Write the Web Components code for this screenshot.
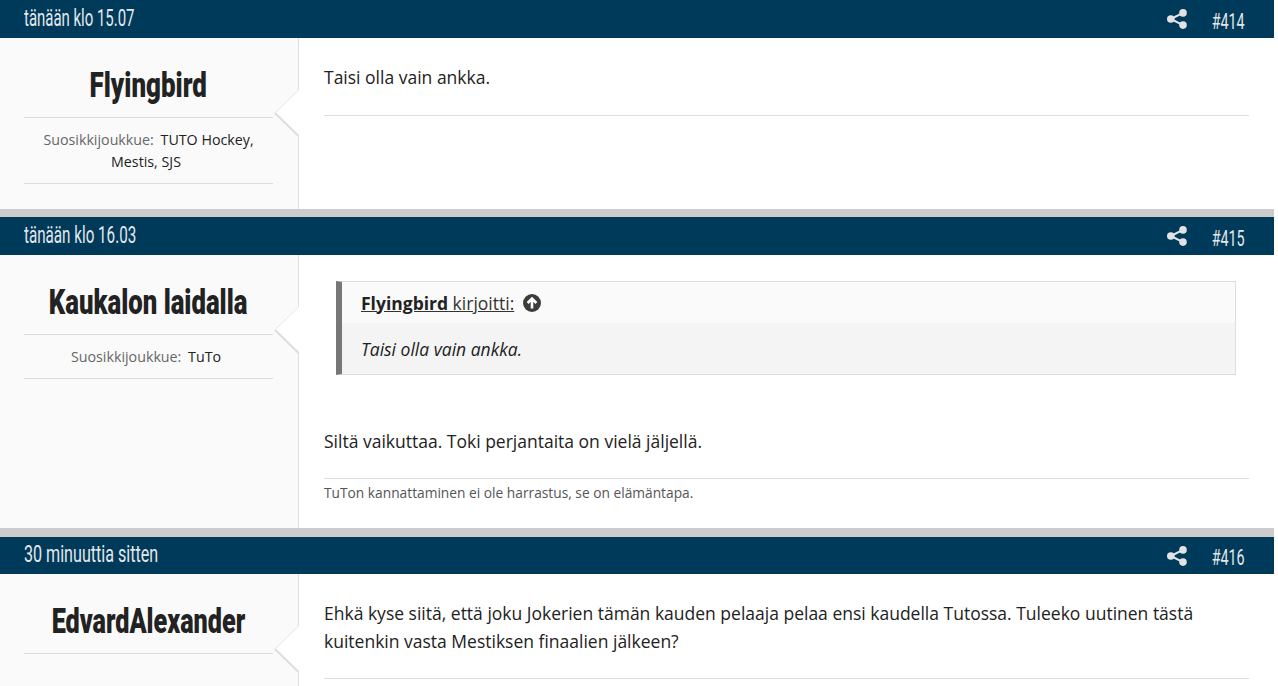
<!DOCTYPE html>
<html lang="fi">
<head>
<meta charset="utf-8">
<title>Keskustelu</title>
<style>
  html, body { margin: 0; padding: 0; background: #fff; height: 686px; overflow: hidden; }
  body { font-family: "Open Sans", sans-serif; color: #222; padding-right: 4px; }
</style>
</head>
<body>

<template id="post-tpl">
  <style>
    :host { display: block; border-bottom: var(--gap, 8px) solid #ccc; }
    :host([last]) { border-bottom: 0; }
    header {
      height: var(--head, 38px);
      background: #003a5a;
      color: #e3e8eb;
      display: flex;
      align-items: center;
      padding: 0 29px 0 24px;
    }
    /* otsikkofontti on kapea, ei ole asennettu: kavennetaan Robotoa */
    .date { flex: 1; font-family: Roboto, sans-serif; font-size: 23px; position: relative; top: -1px; }
    .date span { display: inline-block; white-space: nowrap; transform: scaleX(var(--dx, .66)); transform-origin: left center; }
    .share { width: 20px; height: 20px; margin-right: 26px; display: block; }
    .num { width: 32px; display: flex; justify-content: flex-end; font-family: Roboto, sans-serif; font-size: 22px; position: relative; top: 2px; }
    .num span { display: inline-block; white-space: nowrap; transform: scaleX(.65); transform-origin: right center; }
    .main { display: flex; min-height: var(--h, 171px); }
    aside {
      box-sizing: border-box;
      background: #fafafa;
      border-right: 1px solid #ddd;
      flex: none;
      padding: 0 25px 0 24px;
      width: 299px;
      position: relative;
    }
    .name {
      height: 80px;
      display: flex;
      justify-content: center;
      align-items: center;
      padding-top: 15px;
      box-sizing: border-box;
      font-family: Roboto, sans-serif;
      font-weight: 900;
      font-size: 35px;
      color: #222;
      border-bottom: 1px solid #ddd;
    }
    .name span { display: inline-block; white-space: nowrap; transform: scaleX(var(--sx, .72)); }
    .meta { padding: 11px 0 10px; border-bottom: 1px solid #ddd; text-align: center; font-size: 14.25px; line-height: 22px; color: #222; }
    .arrow { position: absolute; right: -1px; top: 51px; width: 25px; height: 48px; display: block; }
    .body { flex: 1; padding: 0 25px; min-width: 0; }
  </style>
  <header>
    <div class="date"><span><slot name="date"></slot></span></div>
    <svg class="share" viewBox="0 0 20 20" aria-hidden="true">
      <g fill="#e2e2e2"><circle cx="3.8" cy="10" r="3.8"/><circle cx="16" cy="3.9" r="3.8"/><circle cx="16" cy="16.1" r="3.8"/></g>
      <path d="M3.8 10 16 3.9M3.8 10 16 16.1" stroke="#e2e2e2" stroke-width="2" fill="none"/>
    </svg>
    <div class="num"><span><slot name="num"></slot></span></div>
  </header>
  <div class="main">
    <aside>
      <div class="name"><span><slot name="name"></slot></span></div>
      <div class="meta"><slot name="meta"></slot></div>
      <svg class="arrow" viewBox="0 0 25 48" aria-hidden="true">
        <path d="M25 .5 1 24 25 47.5Z" fill="#fff"/>
        <path d="M25 .5 1 24" stroke="#e6e6e6" stroke-width="1" fill="none"/>
        <path d="M1 24 25 47.5" stroke="#ddd" stroke-width="2" fill="none"/>
      </svg>
    </aside>
    <div class="body"><slot></slot></div>
  </div>
</template>

<template id="quote-tpl">
  <style>
    :host { display: block; margin: 26px 13px 0 12px; border: 1px solid #ddd; border-left: 6px solid #777; background: #f4f4f4; }
    .who { background: #fafafa; height: 41px; display: flex; align-items: center; padding: 0 19px; gap: 9px; font-size: 17.5px; }
    .who span { text-decoration: underline; color: #333; }
    b { color: #222; font-weight: 700; }
    .up { width: 18px; height: 18px; display: block; }
    .txt { font-style: italic; padding: 12px 19px 11px; font-size: 17.5px; line-height: 28px; }
  </style>
  <div class="who">
    <span><b><slot name="who"></slot></b> kirjoitti:</span>
    <svg class="up" viewBox="0 0 18 18" aria-hidden="true">
      <circle cx="9" cy="9" r="9" fill="#3c3c3c"/>
      <path d="M9 14.5V5M4.6 9 9 4.6 13.4 9" stroke="#fff" stroke-width="2.6" fill="none"/>
    </svg>
  </div>
  <div class="txt"><slot></slot></div>
</template>

<template id="text-tpl">
  <style>
    :host { display: block; font-size: 17.5px; line-height: 28px; color: #222; }
    p { margin: 0; }
  </style>
  <p><slot></slot></p>
</template>

<template id="meta-tpl">
  <style>
    :host { display: inline; }
    .k { color: #666; margin-right: 3px; }
    .end { margin-right: 5px; }
  </style>
  <span class="k"><slot name="key"></slot></span>
  <slot></slot><span class="end"></span>
</template>

<forum-post style="--h:171px;--sx:.74;--dx:.65">
  <span slot="date">tänään klo 15.07</span>
  <span slot="num">#414</span>
  <span slot="name">Flyingbird</span>
  <forum-meta slot="meta"><span slot="key">Suosikkijoukkue:</span><span>TUTO Hockey,</span> <span>Mestis, SJS</span></forum-meta>
  <post-text style="padding:25px 0 24px;border-bottom:1px solid #ddd">Taisi olla vain ankka.</post-text>
</forum-post>

<forum-post style="--h:273px;--gap:9px;--sx:.735">
  <span slot="date">tänään klo 16.03</span>
  <span slot="num">#415</span>
  <span slot="name">Kaukalon laidalla</span>
  <forum-meta slot="meta"><span slot="key">Suosikkijoukkue:</span>TuTo</forum-meta>
  <forum-quote><span slot="who">Flyingbird</span>Taisi olla vain ankka.</forum-quote>
  <post-text style="padding:52px 0 23px;border-bottom:1px solid #ddd">Siltä vaikuttaa. Toki perjantaita on vielä jäljellä.</post-text>
  <div style="font-size:13.75px;line-height:20px;color:#555;padding-top:4px">TuTon kannattaminen ei ole harrastus, se on elämäntapa.</div>
</forum-post>

<forum-post last style="--h:112px;--head:37px;--sx:.72;--dx:.7">
  <span slot="date">30 minuuttia sitten</span>
  <span slot="num">#416</span>
  <span slot="name">EdvardAlexander</span>
  <post-text style="padding:25px 0 23px;border-bottom:1px solid #ddd">Ehkä kyse siitä, että joku Jokerien tämän kauden pelaaja pelaa ensi kaudella Tutossa. Tuleeko uutinen tästä kuitenkin vasta Mestiksen finaalien jälkeen?</post-text>
</forum-post>

<script>
  function fromTemplate(id) {
    return class extends HTMLElement {
      connectedCallback() {
        if (this.shadowRoot) return;
        this.attachShadow({ mode: 'open' });
        this.shadowRoot.appendChild(document.getElementById(id).content.cloneNode(true));
      }
    };
  }
  customElements.define('forum-post', fromTemplate('post-tpl'));
  customElements.define('forum-quote', fromTemplate('quote-tpl'));
  customElements.define('post-text', fromTemplate('text-tpl'));
  customElements.define('forum-meta', fromTemplate('meta-tpl'));

  // viimeisessa viestissa ei ole suosikkijoukkuetta
  document.querySelectorAll('forum-post').forEach(p => {
    if (!p.querySelector('[slot=meta]')) {
      p.shadowRoot.querySelector('.meta').style.display = 'none';
    }
  });
</script>
</body>
</html>
